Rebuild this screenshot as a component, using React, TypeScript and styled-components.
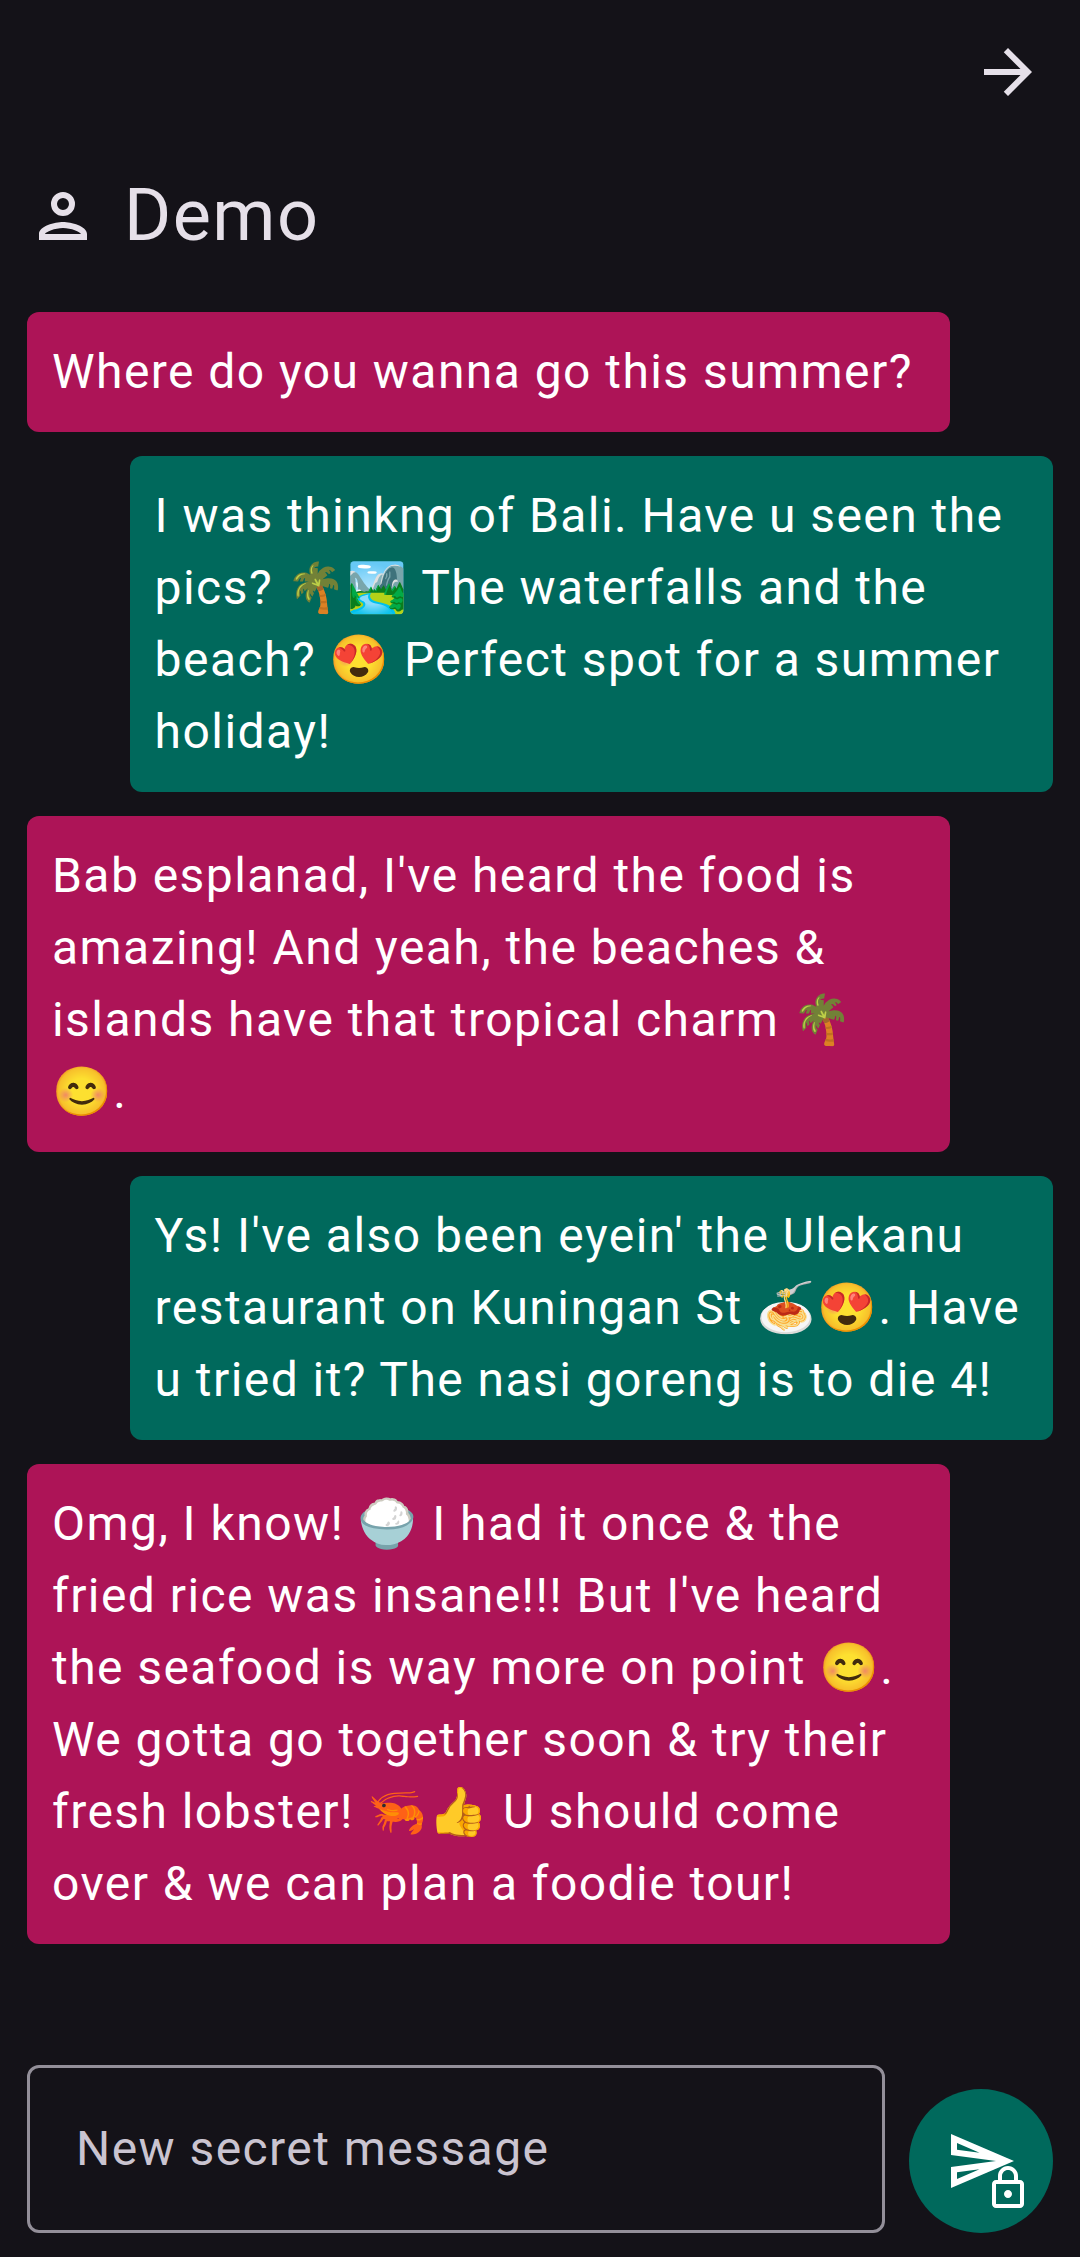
import React, { useState } from 'react';
import styled, { createGlobalStyle } from 'styled-components';

const GlobalStyle = createGlobalStyle`
  *, *::before, *::after {
    box-sizing: border-box;
  }
  body {
    margin: 0;
    background: #141218;
    color: #e6e0e9;
    font-family: Roboto, 'Noto Color Emoji', sans-serif;
    font-size: 48px;
    line-height: 72px;
    letter-spacing: 0.03em;
  }
`;

const Screen = styled.main`
  display: flex;
  flex-direction: column;
  min-height: 100vh;
  padding-bottom: 24px;
`;

const TopBar = styled.header`
  display: flex;
  justify-content: flex-end;
`;

const IconButton = styled.button`
  display: grid;
  place-items: center;
  width: 144px;
  height: 144px;
  padding: 0;
  border: 0;
  border-radius: 50%;
  background: transparent;
  color: inherit;
  cursor: pointer;
`;

const Icon = styled.svg`
  display: block;
  flex: none;
  width: 72px;
  height: 72px;
  fill: currentColor;
`;

const Contact = styled.div`
  display: flex;
  align-items: center;
  gap: 25px;
  height: 144px;
  padding: 0 27px;
`;

const ContactName = styled.h1`
  margin: 0;
  font-size: 72px;
  font-weight: 400;
  line-height: 96px;
`;

const Messages = styled.ol`
  display: flex;
  flex: 1;
  flex-direction: column;
  gap: 24px;
  margin: 0;
  padding: 24px 27px;
  list-style: none;
`;

const Bubble = styled.li<{ $mine: boolean }>`
  align-self: ${({ $mine }) => ($mine ? 'flex-end' : 'flex-start')};
  width: 90%;
  padding: 24px 25px;
  border-radius: 12px;
  background: ${({ $mine }) => ($mine ? '#00695c' : '#ad1457')};
  color: #ffffff;
`;

const Composer = styled.form`
  display: flex;
  align-items: flex-end;
  gap: 24px;
  padding: 0 27px;
`;

const MessageInput = styled.input`
  flex: 1;
  min-width: 0;
  height: 168px;
  padding: 0 46px 2px;
  border: 3px solid #938f99;
  border-radius: 12px;
  outline: none;
  background: transparent;
  color: #e6e0e9;
  font: inherit;
  letter-spacing: inherit;

  &::placeholder {
    color: #cac4d0;
    opacity: 1;
  }
`;

const SendButton = styled(IconButton)`
  flex: none;
  background: #00695c;
  color: #ffffff;
`;

const SendLockIcon = styled.svg`
  display: block;
  width: 144px;
  height: 144px;
  fill: currentColor;
`;

const messages = [
  { mine: false, text: 'Where do you wanna go this summer?' },
  {
    mine: true,
    text: 'I was thinkng of Bali. Have u seen the pics? 🌴🏞️ The waterfalls and the beach? 😍 Perfect spot for a summer holiday!',
  },
  {
    mine: false,
    text: "Bab esplanad, I've heard the food is amazing! And yeah, the beaches & islands have that tropical charm 🌴😊.",
  },
  {
    mine: true,
    text: "Ys! I've also been eyein' the Ulekanu restaurant on Kuningan St 🍝😍. Have u tried it? The nasi goreng is to die 4!",
  },
  {
    mine: false,
    text: "Omg, I know! 🍚 I had it once & the fried rice was insane!!! But I've heard the seafood is way more on point 😊. We gotta go together soon & try their fresh lobster! 🦐👍 U should come over & we can plan a foodie tour!",
  },
];

export default function App() {
  const [draft, setDraft] = useState('');

  return (
    <>
      <GlobalStyle />
      <Screen>
        <TopBar>
          <IconButton type="button" aria-label="Next">
            <Icon viewBox="0 0 24 24" aria-hidden="true">
              <path d="M12 4l-1.41 1.41L16.17 11H4v2h12.17l-5.58 5.59L12 20l8-8z" />
            </Icon>
          </IconButton>
        </TopBar>
        <Contact>
          <Icon viewBox="0 0 24 24" aria-hidden="true">
            <path d="M12 6a2 2 0 1 1 0 4 2 2 0 0 1 0-4m0 10c2.7 0 5.8 1.29 6 2H6c.23-.72 3.31-2 6-2m0-12a4 4 0 1 0 0 8 4 4 0 0 0 0-8m0 10c-2.67 0-8 1.34-8 4v2h16v-2c0-2.66-5.33-4-8-4z" />
          </Icon>
          <ContactName>Demo</ContactName>
        </Contact>
        <Messages>
          {messages.map(({ mine, text }) => (
            <Bubble key={text} $mine={mine}>
              {text}
            </Bubble>
          ))}
        </Messages>
        <Composer onSubmit={(event) => event.preventDefault()}>
          <MessageInput
            type="text"
            aria-label="New secret message"
            placeholder="New secret message"
            value={draft}
            onChange={(event) => setDraft(event.target.value)}
          />
          <SendButton type="submit" aria-label="Send encrypted message">
            <SendLockIcon viewBox="0 0 144 144" aria-hidden="true">
              <path
                transform="translate(36 36) scale(3)"
                d="M4.01 6.03l7.51 3.22-7.52-1 .01-2.22m7.5 8.72L4 17.97v-2.22l7.51-1M2.01 3L2 10l15 2-15 2 .01 7L23 12 2.01 3z"
              />
              <path
                transform="translate(75 75) scale(2)"
                d="M18 8h-1V6c0-2.76-2.24-5-5-5S7 3.24 7 6v2H6c-1.1 0-2 .9-2 2v10c0 1.1.9 2 2 2h12c1.1 0 2-.9 2-2V10c0-1.1-.9-2-2-2zM9 6c0-1.66 1.34-3 3-3s3 1.34 3 3v2H9V6zm9 14H6V10h12v10zm-6-3c1.1 0 2-.9 2-2s-.9-2-2-2-2 .9-2 2 .9 2 2 2z"
              />
            </SendLockIcon>
          </SendButton>
        </Composer>
      </Screen>
    </>
  );
}
